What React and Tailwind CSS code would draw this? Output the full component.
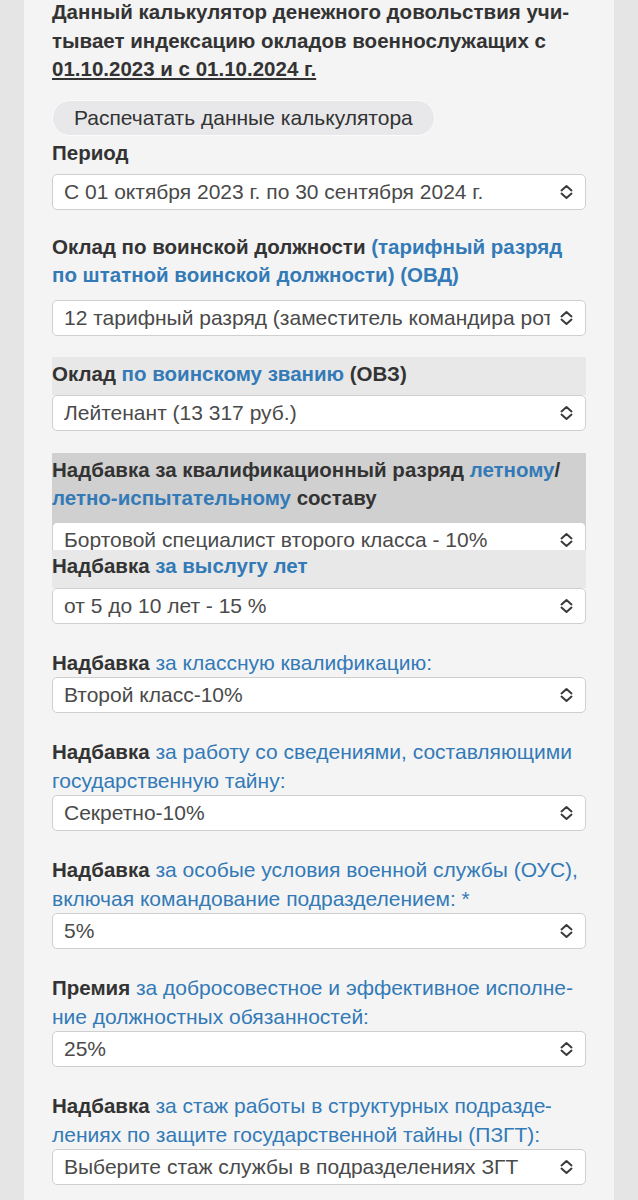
import React from "react";

const BLUE = "text-[#337ab7]";

const Chevrons = () => (
  <svg width="13" height="16" viewBox="0 0 13 16" fill="none" className="shrink-0">
    <path d="M1.5 6.4 L6.5 2 L11.5 6.4" stroke="#3a3a3a" strokeWidth="2" strokeLinecap="round" strokeLinejoin="round" />
    <path d="M1.5 9.6 L6.5 14 L11.5 9.6" stroke="#3a3a3a" strokeWidth="2" strokeLinecap="round" strokeLinejoin="round" />
  </svg>
);

const Select = ({ value }) => (
  <div className="flex h-[36px] items-center rounded-[5px] border border-[#cfcfcf] bg-white pl-[11px] pr-[12px] text-[21px] text-[#4a4a4a]">
    <span className="mr-[10px] min-w-0 flex-1 overflow-hidden whitespace-nowrap">{value}</span>
    <Chevrons />
  </div>
);

const Field = ({ children, value }) => (
  <div className="mt-[24px]">
    <p className="leading-[29px]">{children}</p>
    <Select value={value} />
  </div>
);

const B = ({ children }) => <b className="text-[20.5px]">{children}</b>;

export default function App() {
  return (
    <div className="min-h-screen bg-[#e5e5e5] px-[24px] text-[21px] text-[#333]" style={{ fontFamily: '"Liberation Sans", Arial, sans-serif' }}>
      <div className="min-h-screen bg-[#f4f4f4] px-[28px] pb-10">
        <p className="-mt-[2px] text-[20.5px] font-bold leading-[28.5px]">
          Данный калькулятор денежного довольствия учи{"\u00AD"}тывает индексацию окладов военнослужащих с{" "}
          <span className="underline">01.10.2023 и с 01.10.2024 г.</span>
        </p>

        <button className="mt-[16px] h-[36px] rounded-full border border-[#fbfbfb] bg-[#e8e8ea] px-[21px] text-[21px] text-[#333]">
          Распечатать данные калькулятора
        </button>

        <div className="mt-[3px]">
          <p className="mb-[7px] text-[20.5px] font-bold leading-[28px]">Период</p>
          <Select value="С 01 октября 2023 г. по 30 сентября 2024 г." />
        </div>

        <div className="mt-[23px]">
          <p className="mb-[10px] text-[20.5px] font-bold leading-[28.5px]">
            Оклад по воинской должности <span className={BLUE}>(тарифный разряд по штатной воинской должности) (ОВД)</span>
          </p>
          <Select value="12 тарифный разряд (заместитель командира роты)" />
        </div>

        <div className="mt-[21px]">
          <p className="bg-[#e8e8e8] pb-[7px] pt-[3px] text-[20.5px] font-bold leading-[28px]">
            Оклад <span className={BLUE}>по воинскому званию</span> (ОВЗ)
          </p>
          <Select value="Лейтенант (13 317 руб.)" />
        </div>

        <div className="mt-[22px] h-[97px] overflow-hidden bg-[#d0d0d0] pt-[3px]">
          <p className="mb-[10px] text-[20.5px] font-bold leading-[28px]">
            Надбавка за квалификационный разряд <span className={BLUE}>летному</span>/{" "}
            <span className={`${BLUE} whitespace-nowrap`}>летно-испытательному</span> составу
          </p>
          <Select value="Бортовой специалист второго класса - 10%" />
        </div>

        <div>
          <p className="bg-[#e8e8e8] pb-[8px] pt-[2px] text-[20.5px] font-bold leading-[28px]">
            Надбавка <span className={BLUE}>за выслугу лет</span>
          </p>
          <Select value="от 5 до 10 лет - 15 %" />
        </div>

        <Field value="Второй класс-10%">
          <B>Надбавка</B> <span className={BLUE}>за классную квалификацию:</span>
        </Field>

        <Field value="Секретно-10%">
          <B>Надбавка</B> <span className={BLUE}>за работу со сведениями, составляющими государственную тайну:</span>
        </Field>

        <Field value="5%">
          <B>Надбавка</B> <span className={BLUE}>за особые условия военной службы (ОУС), включая командование подразделением: *</span>
        </Field>

        <Field value="25%">
          <B>Премия</B> <span className={BLUE}>за добросовестное и эффективное исполне{"\u00AD"}ние должностных обязанностей:</span>
        </Field>

        <Field value="Выберите стаж службы в подразделениях ЗГТ">
          <B>Надбавка</B> <span className={BLUE}>за стаж работы в структурных подразде{"\u00AD"}лениях по защите государственной тайны (ПЗГТ):</span>
        </Field>
      </div>
    </div>
  );
}
